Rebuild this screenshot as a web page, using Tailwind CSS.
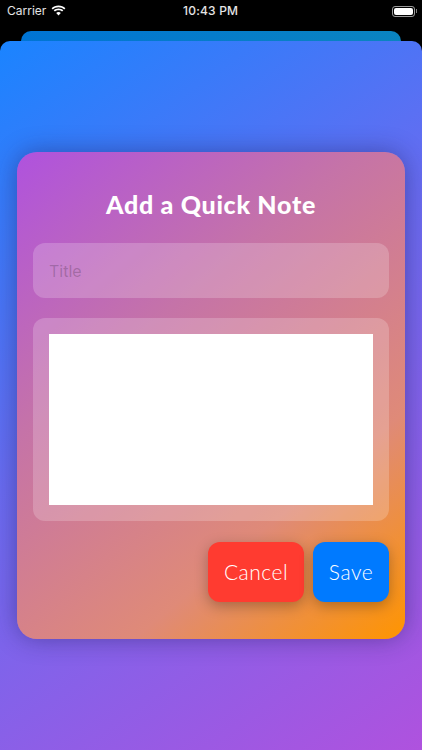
<!DOCTYPE html>
<html lang="en">
<head>
  <meta charset="UTF-8">
  <meta name="viewport" content="width=device-width, initial-scale=1.0">
  <title>Quick Note</title>
  <script src="https://cdn.jsdelivr.net/npm/@tailwindcss/browser@4"></script>
</head>
<body class="bg-black font-['Lato',sans-serif] overflow-hidden">
  <div class="flex flex-col h-[750px] w-[422px]">

    <!-- status bar -->
    <div class="h-[31px] shrink-0 relative flex items-center justify-between pl-[7px] pr-[5px] pt-[1px] text-white">
      <div class="flex items-center gap-[5px] -mt-[10px]">
        <span class="font-['Inter',sans-serif] text-[12px] text-white/90">Carrier</span>
        <svg width="15" height="11" viewBox="0 0 15 11" fill="white" class="-mt-[2px]">
          <path d="M7.5 2.2c2.2 0 4.2.9 5.7 2.3l1.2-1.3C12.6 1.4 10.200.4 7.500.4S2.400 1.400.6 3.200l1.200 1.300c1.500-1.400 3.500-2.300 5.700-2.300z"/>
          <path d="M7.5 5.200c1.400 0 2.600.5 3.600 1.400l1.200-1.300c-1.300-1.200-3-1.900-4.800-1.900s-3.500.7-4.800 1.900l1.200 1.300c1-.9 2.200-1.400 3.600-1.400z"/>
          <path d="M7.500 7c-.9 0-1.700.3-2.300.9l2.300 2.600 2.300-2.600C9.200 7.300 8.400 7 7.500 7z"/>
        </svg>
      </div>
      <span class="absolute left-[183px] top-[2px] font-['Inter',sans-serif] text-[12px] font-medium tracking-[0.2px] text-white/90">10:43 PM</span>
      <div class="flex items-center -mt-[10px]">
        <div class="w-[23px] h-[11px] rounded-[3px] border border-white/60 p-[1px]"><div class="w-full h-full bg-white rounded-[2px]"></div></div>
        <div class="w-[1px] h-[4px] bg-white/50 ml-[1px]"></div>
      </div>
    </div>

    <!-- sheet behind -->
    <div class="mx-[21px] h-[20px] shrink-0 rounded-t-[10px] bg-[linear-gradient(100deg,#0074d4,#0a84c0)]"></div>

    <!-- sheet -->
    <div class="-mt-[10px] flex-1 rounded-t-[10px] pt-[111px] px-[17px] bg-[linear-gradient(145deg,#1a84ff_0%,#6a6bf0_45%,#af52de_100%)]">
      <div class="h-[487px] rounded-[20px] p-[16px] shadow-[0_0_24px_rgba(30,30,90,0.45)] bg-[linear-gradient(140deg,#af52de_0%,#c573a8_35%,#df8a78_72%,#ff9500_100%)]">
        <h1 class="h-[75px] pt-[17px] text-center text-[25px] leading-[38px] font-black tracking-[0.7px] text-white">Add a Quick Note</h1>

        <div class="h-[55px] rounded-[12px] bg-white/20 flex items-center px-[16px]">
          <span class="font-['Inter',sans-serif] text-[16px] text-black/20">Title</span>
        </div>

        <div class="mt-[20px] h-[203px] rounded-[12px] bg-white/20 p-[16px]">
          <div class="w-full h-full bg-white"></div>
        </div>

        <div class="mt-[21px] flex justify-end gap-[9px]">
          <button class="w-[96px] h-[60px] rounded-[12px] bg-[#ff3b30] text-white text-[21px] font-light tracking-[0.5px] shadow-[0_4px_14px_rgba(0,0,0,0.28)]">Cancel</button>
          <button class="w-[76px] h-[60px] rounded-[12px] bg-[#007aff] text-white text-[21px] font-light tracking-[0.5px] shadow-[0_4px_14px_rgba(0,0,0,0.28)]">Save</button>
        </div>
      </div>
    </div>

  </div>
</body>
</html>
